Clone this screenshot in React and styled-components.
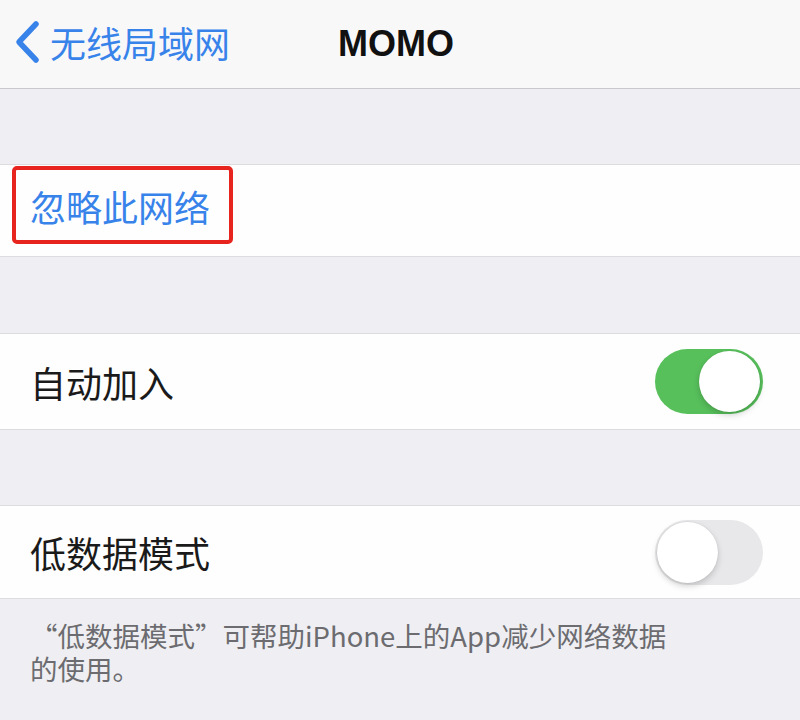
import React from "react";
import styled, { createGlobalStyle } from "styled-components";

const GlobalStyle = createGlobalStyle`
  html, body {
    margin: 0;
    padding: 0;
    background: #efeff3;
  }
  body {
    font-family: "Noto Sans CJK SC", "Noto Sans", sans-serif;
  }
`;

const Screen = styled.div`
  width: 800px;
  height: 720px;
  overflow: hidden;
  background: #efeff3;
  display: flex;
  flex-direction: column;
`;

const NavBar = styled.div`
  height: 88px;
  background: #f8f8f9;
  border-bottom: 1px solid #c9c9cc;
  display: flex;
  align-items: center;
  position: relative;
  flex-shrink: 0;
`;

const BackButton = styled.div`
  display: flex;
  align-items: center;
  gap: 10px;
  padding-left: 14px;
  color: #3883ea;
  font-size: 36px;
  margin-top: -4px;
`;

const NavTitle = styled.div`
  position: absolute;
  left: 338px;
  top: 0;
  height: 88px;
  display: flex;
  align-items: center;
  margin-top: 0;
  font-family: "Liberation Sans", Arial, sans-serif;
  font-weight: 700;
  font-size: 36px;
  color: #111;
`;

const Spacer = styled.div`
  height: ${(p) => p.h}px;
  flex-shrink: 0;
`;

const Row = styled.div`
  height: ${(p) => p.h}px;
  background: #fefefe;
  border-top: 1px solid #dcdcdf;
  border-bottom: 1px solid #dcdcdf;
  display: flex;
  align-items: center;
  justify-content: space-between;
  padding: 0 37px 0 30px;
  flex-shrink: 0;
  font-size: 36px;
  color: #1a1a1a;
`;

const HighlightRow = styled(Row)`
  align-items: flex-start;
  padding-left: 12px;
`;

const RedBox = styled.div`
  margin-top: 1px;
  width: 199px;
  height: 70px;
  border: 4px solid #e8241e;
  border-radius: 5px;
  display: flex;
  align-items: center;
  padding-left: 14px;
  box-sizing: content-box;
  color: #3883ea;
`;

const Label = styled.span`
  margin-top: ${(p) => p.shift || 0}px;
`;

const Toggle = styled.div`
  width: 108px;
  height: 65px;
  border-radius: 33px;
  background: ${(p) => (p.on ? "#57c05b" : "#e8e8ea")};
  position: relative;
  flex-shrink: 0;
`;

const Knob = styled.div`
  position: absolute;
  top: 2px;
  ${(p) => (p.on ? "right: 3px;" : "left: 2px;")}
  width: 61px;
  height: 61px;
  border-radius: 50%;
  background: #fff;
  box-shadow: 0 3px 6px rgba(0, 0, 0, 0.18), 0 0 0 0.5px rgba(0, 0, 0, 0.06);
`;

const Footer = styled.div`
  padding: 20px 30px 0 30px;
  font-size: 27.5px;
  line-height: 33px;
  color: #6c6c70;
  width: 645px;
`;

const Chevron = () => (
  <svg width="26" height="44" viewBox="0 0 26 44">
    <path
      d="M22 4 L5 22 L22 40"
      fill="none"
      stroke="#3883ea"
      strokeWidth="5.5"
      strokeLinecap="round"
      strokeLinejoin="round"
    />
  </svg>
);

const Switch = ({ on }) => (
  <Toggle on={on ? 1 : 0}>
    <Knob on={on ? 1 : 0} />
  </Toggle>
);

export default function App() {
  return (
    <Screen>
      <GlobalStyle />
      <NavBar>
        <BackButton>
          <Chevron />
          <span>无线局域网</span>
        </BackButton>
        <NavTitle>MOMO</NavTitle>
      </NavBar>
      <Spacer h={75} />
      <HighlightRow h={91}>
        <RedBox>
          <Label shift={2}>忽略此网络</Label>
        </RedBox>
      </HighlightRow>
      <Spacer h={76} />
      <Row h={95}>
        <Label>自动加入</Label>
        <Switch on />
      </Row>
      <Spacer h={75} />
      <Row h={92}>
        <Label>低数据模式</Label>
        <Switch />
      </Row>
      <Footer>“低数据模式”可帮助iPhone上的App减少网络数据的使用。</Footer>
    </Screen>
  );
}
